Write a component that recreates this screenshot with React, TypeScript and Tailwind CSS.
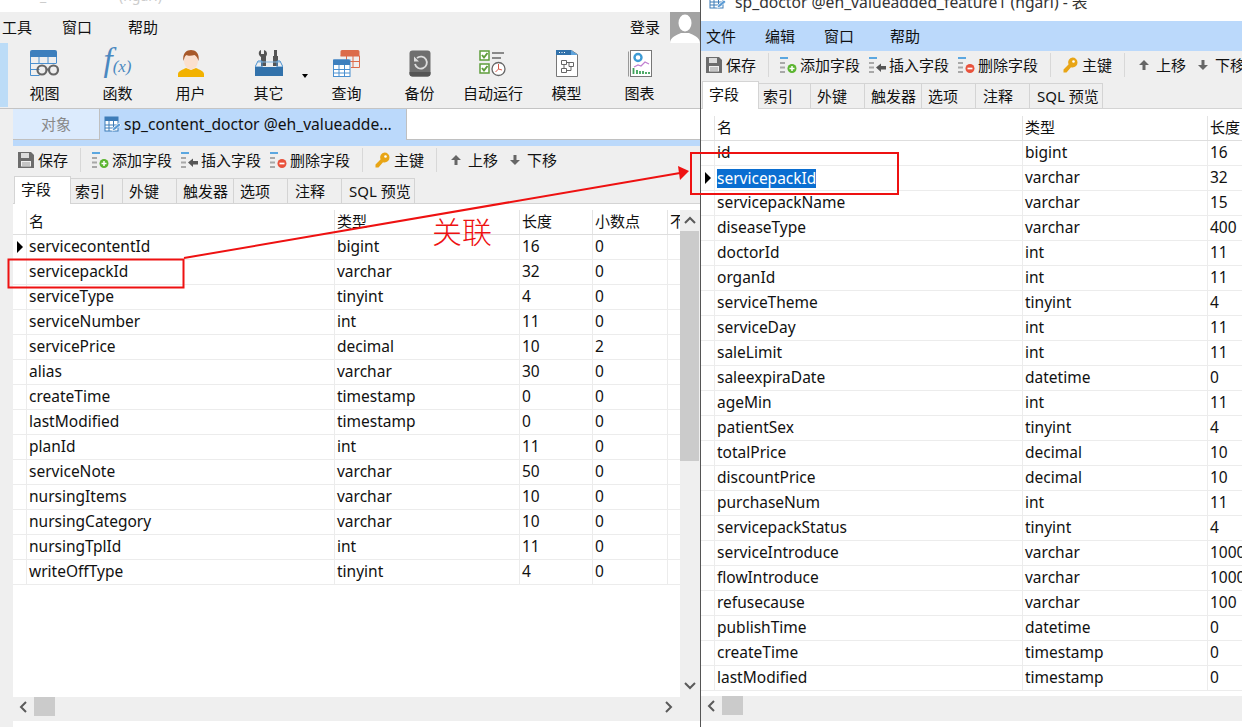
import React from "react";

type Row = string[];

const leftRows: Row[] = [
  ["servicecontentId", "bigint", "16", "0"],
  ["servicepackId", "varchar", "32", "0"],
  ["serviceType", "tinyint", "4", "0"],
  ["serviceNumber", "int", "11", "0"],
  ["servicePrice", "decimal", "10", "2"],
  ["alias", "varchar", "30", "0"],
  ["createTime", "timestamp", "0", "0"],
  ["lastModified", "timestamp", "0", "0"],
  ["planId", "int", "11", "0"],
  ["serviceNote", "varchar", "50", "0"],
  ["nursingItems", "varchar", "10", "0"],
  ["nursingCategory", "varchar", "10", "0"],
  ["nursingTplId", "int", "11", "0"],
  ["writeOffType", "tinyint", "4", "0"],
];

const rightRows: Row[] = [
  ["id", "bigint", "16"],
  ["servicepackId", "varchar", "32"],
  ["servicepackName", "varchar", "15"],
  ["diseaseType", "varchar", "400"],
  ["doctorId", "int", "11"],
  ["organId", "int", "11"],
  ["serviceTheme", "tinyint", "4"],
  ["serviceDay", "int", "11"],
  ["saleLimit", "int", "11"],
  ["saleexpiraDate", "datetime", "0"],
  ["ageMin", "int", "11"],
  ["patientSex", "tinyint", "4"],
  ["totalPrice", "decimal", "10"],
  ["discountPrice", "decimal", "10"],
  ["purchaseNum", "int", "11"],
  ["servicepackStatus", "tinyint", "4"],
  ["serviceIntroduce", "varchar", "1000"],
  ["flowIntroduce", "varchar", "1000"],
  ["refusecause", "varchar", "100"],
  ["publishTime", "datetime", "0"],
  ["createTime", "timestamp", "0"],
  ["lastModified", "timestamp", "0"],
];

const tabs = [
  { label: "字段", cls: "w-[57px] pl-[6px]" },
  { label: "索引", cls: "w-[52px] pl-[4px]" },
  { label: "外键", cls: "w-[54px] pl-[6px]" },
  { label: "触发器", cls: "w-[57px] pl-[6px]" },
  { label: "选项", cls: "w-[54px] pl-[6px]" },
  { label: "注释", cls: "w-[54px] pl-[7px]" },
  { label: "SQL 预览", cls: "w-[73px] pl-[7px]" },
];

const TableEditIcon = () => (
  <svg width="18" height="18" viewBox="0 0 18 18">
    <rect x="1" y="1" width="13" height="14" fill="#fff" stroke="#3d7cb8" />
    <rect x="1" y="1" width="13" height="4" fill="#3d7cb8" />
    <path d="M1 9h13M1 12h13M5 5v10M9.500 5v10" stroke="#3d7cb8" />
    <path d="M8 15l1-3 6-5 2 2-6 5z" fill="#5b9bd5" stroke="#fff" strokeWidth="0.7" />
  </svg>
);

const ViewIcon = () => (
  <svg width="30" height="28" viewBox="0 0 30 28">
    <path d="M2 1h23a2 2 0 0 1 2 2v5H0V3a2 2 0 0 1 2-2z" fill="#3d7fbd" />
    <path d="M.5 8v18.500h9M26.500 8v6M.5 14.500h26M.5 20.500h9M9 8v7M18 8v7" stroke="#4a90d0" fill="none" />
    <circle cx="12" cy="21" r="4.500" fill="none" stroke="#666" strokeWidth="2.200" />
    <circle cx="23.500" cy="21" r="4.500" fill="none" stroke="#666" strokeWidth="2.200" />
    <path d="M16 20.500h4" stroke="#666" strokeWidth="2" />
  </svg>
);

const FunctionIcon = () => (
  <span className="flex h-[28px] items-end font-['Liberation_Serif',serif] italic text-[#4a88c0] leading-none">
    <span className="text-[33px]">f</span>
    <span className="text-[17px] pb-[2px]">(x)</span>
  </span>
);

const UserIcon = () => (
  <svg width="26" height="27" viewBox="0 0 26 27">
    <path d="M0 27v-3c0-3 5-4.500 8-6l5 2 5-2c3 1.500 8 3 8 6v3z" fill="#f2b200" />
    <ellipse cx="13" cy="11" rx="7" ry="8.500" fill="#fbe0cf" />
    <path d="M5.500 11C4 3 9 0 13 0s9 3 7.500 11c-1-3-2-5-4-6-3 1-7 1-8 0-2 1-2 3-3 6z" fill="#a8592a" />
  </svg>
);

const ToolsIcon = () => (
  <svg width="28" height="27" viewBox="0 0 28 27">
    <path d="M6 0v4h3V0c3 1 4 4 2 6.500V16H6V7C3 5 3 1 6 0z" fill="#555" />
    <path d="M19 0h3v6h1v10h-5V6h1z" fill="#555" />
    <path d="M0 17l3-6h4v6zM28 17l-3-6h-3v6z" fill="none" stroke="#4a90d0" />
    <path d="M3 12h22" stroke="#7fb4e0" />
    <path d="M0 17h28v9H0z" fill="#3272ab" />
  </svg>
);

const QueryIcon = () => (
  <svg width="27" height="28" viewBox="0 0 27 28">
    <path d="M9 1h16a1.500 1.500 0 0 1 1.500 1.500V7H7.500V2.500A1.500 1.500 0 0 1 9 1z" fill="#dc6b4a" />
    <path d="M7.500 7h19v11.500H18M13.500 7v5M20 7v11.500M7.500 12.500h19" stroke="#dc6b4a" fill="none" />
    <rect x="0.500" y="11" width="16.500" height="16.500" fill="#fff" stroke="#4a90d0" />
    <path d="M2 10.500h13.500a1.500 1.500 0 0 1 1.500 1.500v4H0v-4a1.500 1.500 0 0 1 2-1.500z" fill="#3d7fbd" />
    <path d="M0.500 20.500h16.500M0.500 24h16.500M6 16v11M11.500 16v11" stroke="#4a90d0" />
  </svg>
);

const BackupIcon = () => (
  <svg width="22" height="27" viewBox="0 0 22 27">
    <rect x="0.500" y="0.500" width="21" height="26" rx="3" fill="#6f6f6f" />
    <path d="M0.500 22h21v1.500a3 3 0 0 1-3 3h-15a3 3 0 0 1-3-3z" fill="#555" />
    <path d="M8 8a6 6 0 1 1-2 6" fill="none" stroke="#ddd" strokeWidth="1.800" />
    <path d="M5 6.500v5h5z" fill="#ddd" />
  </svg>
);

const AutoIcon = () => (
  <svg width="28" height="27" viewBox="0 0 28 27">
    <rect x="1" y="1" width="9" height="9" fill="#fff" stroke="#5f9e3c" strokeWidth="1.500" />
    <rect x="1" y="14" width="9" height="9" fill="#fff" stroke="#5f9e3c" strokeWidth="1.500" />
    <path d="M3 5l2 2.500L8.500 3M3 18l2 2.500L8.500 16" fill="none" stroke="#5f9e3c" strokeWidth="2" />
    <path d="M13 3h12M13 8h9" stroke="#8a8a8a" strokeWidth="2" />
    <circle cx="19.500" cy="19" r="6.500" fill="#fff" stroke="#666" strokeWidth="1.300" />
    <path d="M19.500 14v5l-3 3M19.500 19l3.500 1" fill="none" stroke="#d65a4a" />
  </svg>
);

const ModelIcon = () => (
  <svg width="22" height="27" viewBox="0 0 22 27">
    <path d="M0.500 0.500h15l6 4v22H0.500z" fill="#fff" stroke="#777" />
    <path d="M0 0h15v5H0z" fill="#3272ab" />
    <path d="M15 0l7 5h-7z" fill="#5ea3dc" />
    <path d="M3 2.500h1M5.500 2.500h1M8 2.500h1" stroke="#fff" />
    <path d="M5.500 10.500h5v4h-5zM13 12.500h4.500v4H13zM5.500 18.500h5v4h-5zM8 14.500v4M10.500 12.500H13M15 16.500v4h-4.500" fill="none" stroke="#666" />
  </svg>
);

const ChartIcon = () => (
  <svg width="24" height="27" viewBox="0 0 24 27">
    <rect x="2.500" y="0.500" width="21" height="26" fill="#fff" stroke="#777" />
    <path d="M0.500 1.500v25" stroke="#999" />
    <circle cx="10" cy="7.500" r="3.500" fill="none" stroke="#3d9bd5" strokeWidth="2.400" />
    <path d="M6 17l4-2 3 1 4-4 4 2" fill="none" stroke="#c07fd0" strokeWidth="1.200" />
    <path d="M5.500 24v-6M9 24v-4M12 24v-3M15 24v-3M18 24v-2M21 24v-2" stroke="#3fa35a" strokeWidth="1.800" />
  </svg>
);

const SaveIcon = () => (
  <svg width="16" height="16" viewBox="0 0 16 16">
    <path d="M0 0h13l3 3v13H0z" fill="#6c6c6c" />
    <rect x="3" y="1" width="8" height="5" fill="#ddd" />
    <rect x="3" y="9" width="10" height="5.500" fill="#f0f0f0" />
    <path d="M4 11h8M4 13h8" stroke="#999" />
  </svg>
);

const FieldLines = () => (
  <>
    <path d="M0 1h8" stroke="#5ba7e0" strokeWidth="2" />
    <path d="M0 6h5M0 10.500h5M0 15h5" stroke="#a8a8a8" strokeWidth="2" />
  </>
);

const AddFieldIcon = () => (
  <svg width="17" height="16" viewBox="0 0 17 16">
    <FieldLines />
    <circle cx="12" cy="11.500" r="4.500" fill="#5cb531" />
    <path d="M9.500 11.500h5M12 9v5" stroke="#fff" strokeWidth="1.500" />
  </svg>
);

const InsertFieldIcon = () => (
  <svg width="17" height="16" viewBox="0 0 17 16">
    <FieldLines />
    <path d="M7 10.500l5-4v2.500h5v3.500h-5v2.500z" fill="#555" />
  </svg>
);

const DeleteFieldIcon = () => (
  <svg width="17" height="16" viewBox="0 0 17 16">
    <FieldLines />
    <circle cx="12" cy="11.500" r="4.500" fill="#e9523c" />
    <path d="M9.500 11.500h5" stroke="#fff" strokeWidth="1.700" />
  </svg>
);

const KeyIcon = () => (
  <svg width="15" height="16" viewBox="0 0 15 16">
    <path d="M9.500 0.500a5 5 0 0 1 0 10 5 5 0 0 1-1.500-.3L3.500 15.500H0.500v-3l5-5a5 5 0 0 1 4-7z" fill="#e8a516" />
    <circle cx="10.500" cy="4.500" r="1.300" fill="#fff" />
  </svg>
);

const UpIcon = () => (
  <svg width="12" height="12" viewBox="0 0 12 12">
    <path d="M6 1l5 5H7.500v5h-3V6H1z" fill="#666" />
  </svg>
);

const DownIcon = () => (
  <svg width="12" height="12" viewBox="0 0 12 12">
    <path d="M6 11l5-5H7.500V1h-3v5H1z" fill="#666" />
  </svg>
);

const ToolbarButton = ({ icon, label, className }: { icon: React.ReactNode; label: string; className?: string }) => (
  <div className={`flex items-center shrink-0 ${className ?? ""}`}>
    {icon}
    <span>{label}</span>
  </div>
);

const Separator = ({ className }: { className: string }) => (
  <div className={`w-px h-[24px] bg-[#d8d8d8] shrink-0 ${className}`} />
);

// the field toolbar and the tab row are the same in both windows
const FieldToolbar = () => (
  <div className="flex items-center h-[30px] pl-[5px] pb-[2px] bg-[#efefef] text-[15px] text-[#111] whitespace-nowrap overflow-hidden">
    <ToolbarButton icon={<SaveIcon />} label="保存" className="gap-[4px] w-[50px]" />
    <Separator className="ml-[12px] mr-[11px]" />
    <ToolbarButton icon={<AddFieldIcon />} label="添加字段" className="gap-[3px] w-[89px]" />
    <ToolbarButton icon={<InsertFieldIcon />} label="插入字段" className="gap-[3px] w-[89px]" />
    <ToolbarButton icon={<DeleteFieldIcon />} label="删除字段" className="gap-[3px] w-[80px]" />
    <Separator className="ml-[12px] mr-[12px]" />
    <ToolbarButton icon={<KeyIcon />} label="主键" className="gap-[4px] w-[50px]" />
    <Separator className="ml-[11px] mr-[13px]" />
    <ToolbarButton icon={<UpIcon />} label="上移" className="gap-[6px] w-[59px]" />
    <ToolbarButton icon={<DownIcon />} label="下移" className="gap-[6px] w-[48px]" />
  </div>
);

const TabRow = () => (
  <div className="flex items-end h-[28px] bg-[#efefef] border-b border-[#d4d4d4] text-[15px] text-[#111]">
    <div className="w-px shrink-0" />
    {tabs.map((tab, i) =>
      i === 0 ? (
        <div
          key={tab.label}
          className={`${tab.cls} h-[28px] -mb-px flex items-center pb-[3px] bg-white border-t border-x border-[#d4d4d4]`}
        >
          {tab.label}
        </div>
      ) : (
        <div
          key={tab.label}
          className={`${tab.cls} h-[25px] flex items-center border-t border-r border-[#d4d4d4] whitespace-nowrap`}
        >
          {tab.label}
        </div>
      )
    )}
  </div>
);

const Pointer = () => <div className="w-0 h-0 border-y-[6px] border-y-transparent border-l-[6px] border-l-black" />;

const FieldGrid = ({
  headers,
  rows,
  widths,
  gutter,
  current,
  selected,
}: {
  headers: string[];
  rows: Row[];
  widths: string[];
  gutter: string;
  current: number;
  selected?: boolean;
}) => (
  <div className="text-[15.5px] text-[#111] whitespace-nowrap">
    <div className="flex h-[25px] border-b border-[#dedede] text-[15px]">
      <div className={`${gutter} shrink-0 border-r border-[#e4e4e4]`} />
      {headers.map((h, i) => (
        <div key={h} className={`${widths[i]} shrink-0 pl-[2px] border-r border-[#e4e4e4] leading-[22px] overflow-hidden`}>
          {h}
        </div>
      ))}
    </div>
    {rows.map((row, r) => (
      <div key={row[0]} className="flex h-[25px] border-b border-[#ececec]">
        <div className={`${gutter} shrink-0 border-r border-[#ececec] flex items-center justify-center`}>
          {r === current && <Pointer />}
        </div>
        {row.map((cell, c) => (
          <div key={c} className={`${widths[c]} shrink-0 pl-[2px] border-r border-[#ececec] leading-[22px] overflow-hidden`}>
            {selected && r === current && c === 0 ? (
              <span className="inline-block h-[19px] leading-[18px] align-top mt-[3px] bg-[#0a6ed1] text-white">{cell}</span>
            ) : (
              cell
            )}
          </div>
        ))}
      </div>
    ))}
  </div>
);

const ChevronLeft = () => (
  <svg width="9" height="12" viewBox="0 0 9 12">
    <path d="M7 1L2 6l5 5" fill="none" stroke="#5a5a5a" strokeWidth="2" />
  </svg>
);

const ChevronRight = () => (
  <svg width="9" height="12" viewBox="0 0 9 12">
    <path d="M2 1l5 5-5 5" fill="none" stroke="#5a5a5a" strokeWidth="2" />
  </svg>
);

const LeftWindow = () => (
  <div className="w-[700px] shrink-0 flex flex-col h-full overflow-hidden">
    <div className="h-[12px] bg-white overflow-hidden text-[14px] leading-none text-[#ccc] pl-[40px] whitespace-nowrap">
      <div className="-mt-[11px]">_&nbsp;&nbsp;&nbsp;&nbsp;&nbsp;&nbsp;&nbsp;&nbsp;&nbsp;&nbsp;&nbsp;&nbsp;&nbsp;&nbsp;&nbsp;&nbsp;&nbsp;&nbsp;&nbsp;&nbsp;(ngari)</div>
    </div>
    <div className="h-[31px] bg-[#efefef] flex items-center text-[15px] text-[#111] relative shrink-0">
      <span className="ml-[2px]">工具</span>
      <span className="ml-[30px]">窗口</span>
      <span className="ml-[36px]">帮助</span>
      <span className="ml-auto mr-[10px]">登录</span>
      <div className="w-[30px] h-[31px] bg-[#a3a3a3] overflow-hidden">
        <svg width="30" height="31" viewBox="0 0 30 31">
          <ellipse cx="15" cy="11" rx="6.500" ry="8.500" fill="#fff" />
          <path d="M0 31c0-6 7-8 11-10h8c4 2 11 4 11 10z" fill="#fff" />
        </svg>
      </div>
    </div>
    <div className="h-[66px] bg-[#efefef] border-b border-[#c4c4c4] flex shrink-0 text-[15px] text-[#111]">
      <div className="w-[8px] h-[64px] bg-[#bcdcf7] shrink-0" />
      {[
        { label: "视图", icon: <ViewIcon />, w: "w-[73px]" },
        { label: "函数", icon: <FunctionIcon />, w: "w-[73px]" },
        { label: "用户", icon: <UserIcon />, w: "w-[73px]" },
        { label: "其它", icon: <ToolsIcon />, w: "w-[83px]" },
        { label: "查询", icon: <QueryIcon />, w: "w-[73px]" },
        { label: "备份", icon: <BackupIcon />, w: "w-[73px]" },
        { label: "自动运行", icon: <AutoIcon />, w: "w-[74px]" },
        { label: "模型", icon: <ModelIcon />, w: "w-[73px]" },
        { label: "图表", icon: <ChartIcon />, w: "w-[73px]" },
      ].map((item) => (
        <div key={item.label} className={`${item.w} relative flex flex-col items-center pt-[6px]`}>
          <div className="h-[28px] flex items-center justify-center">{item.icon}</div>
          <span className="mt-[6px] leading-[20px]">{item.label}</span>
          {item.label === "其它" && (
            <div className="absolute right-[2px] top-[31px] w-0 h-0 border-x-[3px] border-x-transparent border-t-[4px] border-t-black" />
          )}
        </div>
      ))}
    </div>
    <div className="flex-1 flex min-h-0 bg-[#efefef]">
      <div className="w-[13px] shrink-0" />
      <div className="flex-1 flex flex-col min-w-0">
        <div className="h-[31px] flex shrink-0 bg-[#bbd9fb]">
          <div className="w-[87px] flex items-center justify-center bg-[#dcebfd] border-r border-b border-[#c0c0c0] text-[15px] text-[#888]">
            对象
          </div>
          <div className="w-[306px] flex items-center pl-[4px] gap-[2px] text-[15.65px] text-[#111] whitespace-nowrap">
            <TableEditIcon />
            <span className="pt-[1px]">sp_content_doctor @eh_valueadde...</span>
          </div>
          <div className="flex-1 bg-white border-l border-b border-[#c0c0c0]" />
        </div>
        <div className="h-[6px] bg-[#bbd9fb] shrink-0" />
        <FieldToolbar />
        <TabRow />
        <div className="flex-1 flex min-h-0">
          <div className="flex-1 bg-white pt-[6px] overflow-hidden">
            <FieldGrid
              headers={["名", "类型", "长度", "小数点", "不"]}
              rows={leftRows.map((r) => [...r, ""])}
              widths={["w-[308px]", "w-[185px]", "w-[73px]", "w-[75px]", "w-[13px]"]}
              gutter="w-[14px]"
              current={0}
            />
          </div>
          <div className="w-[20px] shrink-0 flex flex-col bg-[#efefef]">
            <div className="h-[6px] bg-white shrink-0" />
            <div className="h-[21px] flex items-center justify-center shrink-0">
              <svg width="12" height="9" viewBox="0 0 12 9">
                <path d="M1 7l5-5 5 5" fill="none" stroke="#5a5a5a" strokeWidth="2" />
              </svg>
            </div>
            <div className="h-[230px] w-[19px] bg-[#cbcbcb] shrink-0" />
            <div className="mt-auto h-[20px] pb-[4px] flex items-center justify-center shrink-0">
              <svg width="12" height="9" viewBox="0 0 12 9">
                <path d="M1 2l5 5 5-5" fill="none" stroke="#5a5a5a" strokeWidth="2" />
              </svg>
            </div>
          </div>
        </div>
        <div className="h-[24px] flex shrink-0 bg-[#efefef]">
          <div className="h-[19px] w-full flex items-center">
            <div className="w-[21px] flex justify-center">
              <ChevronLeft />
            </div>
            <div className="w-[21px] h-[19px] bg-[#cbcbcb]" />
            <div className="ml-auto mr-[27px]">
              <ChevronRight />
            </div>
          </div>
        </div>
        <div className="h-[6px] bg-white shrink-0" />
      </div>
    </div>
  </div>
);

const RightWindow = () => (
  <div className="flex-1 min-w-0 flex flex-col h-full border-l border-[#555] overflow-hidden">
    <div className="h-[21px] bg-white overflow-hidden flex items-start pl-[8px] gap-[8px] text-[15.7px] text-[#333] whitespace-nowrap shrink-0">
      <div className="-mt-[7px] shrink-0">
        <TableEditIcon />
      </div>
      <span className="-mt-[9px]">sp_doctor @en_valueadded_feature1 (ngari) - 表</span>
    </div>
    <div className="h-[30px] bg-[#bbd9fb] flex items-center text-[15px] text-[#111] shrink-0">
      <span className="ml-[5px]">文件</span>
      <span className="ml-[29px]">编辑</span>
      <span className="ml-[29px]">窗口</span>
      <span className="ml-[36px]">帮助</span>
    </div>
    <FieldToolbar />
    <TabRow />
    <div className="flex-1 bg-white pt-[7px] min-h-0 overflow-hidden">
      <FieldGrid
        headers={["名", "类型", "长度"]}
        rows={rightRows}
        widths={["w-[308px]", "w-[185px]", "w-[40px]"]}
        gutter="w-[14px]"
        current={1}
        selected
      />
    </div>
    <div className="h-[25px] bg-[#efefef] shrink-0">
      <div className="h-[19px] flex items-center">
        <div className="w-[21px] flex justify-center">
          <ChevronLeft />
        </div>
        <div className="w-[21px] h-[19px] bg-[#cbcbcb]" />
      </div>
    </div>
    <div className="h-[6px] bg-white shrink-0" />
  </div>
);

export default function App() {
  return (
    <div className="relative w-[1242px] h-[727px] flex overflow-hidden bg-white font-['Noto_Sans','Noto_Sans_CJK_SC',sans-serif]">
      <LeftWindow />
      <RightWindow />
      {/* red annotations drawn over the screenshot */}
      <svg className="absolute inset-0 pointer-events-none" width="1242" height="727">
        <rect x="8.500" y="259.500" width="175" height="28" fill="none" stroke="#ee1111" strokeWidth="2" />
        <rect x="691" y="153" width="207" height="41" fill="none" stroke="#ee1111" strokeWidth="2" />
        <path d="M184 258L680 173" stroke="#ee1111" strokeWidth="2" />
        <path d="M689 171L678 166L680 180z" fill="#ee1111" />
      </svg>
      <span className="absolute left-[432px] top-[213px] text-[30px] leading-[34px] text-[#ee1111] font-['Noto_Sans_CJK_SC',serif] font-light">
        关联
      </span>
    </div>
  );
}
